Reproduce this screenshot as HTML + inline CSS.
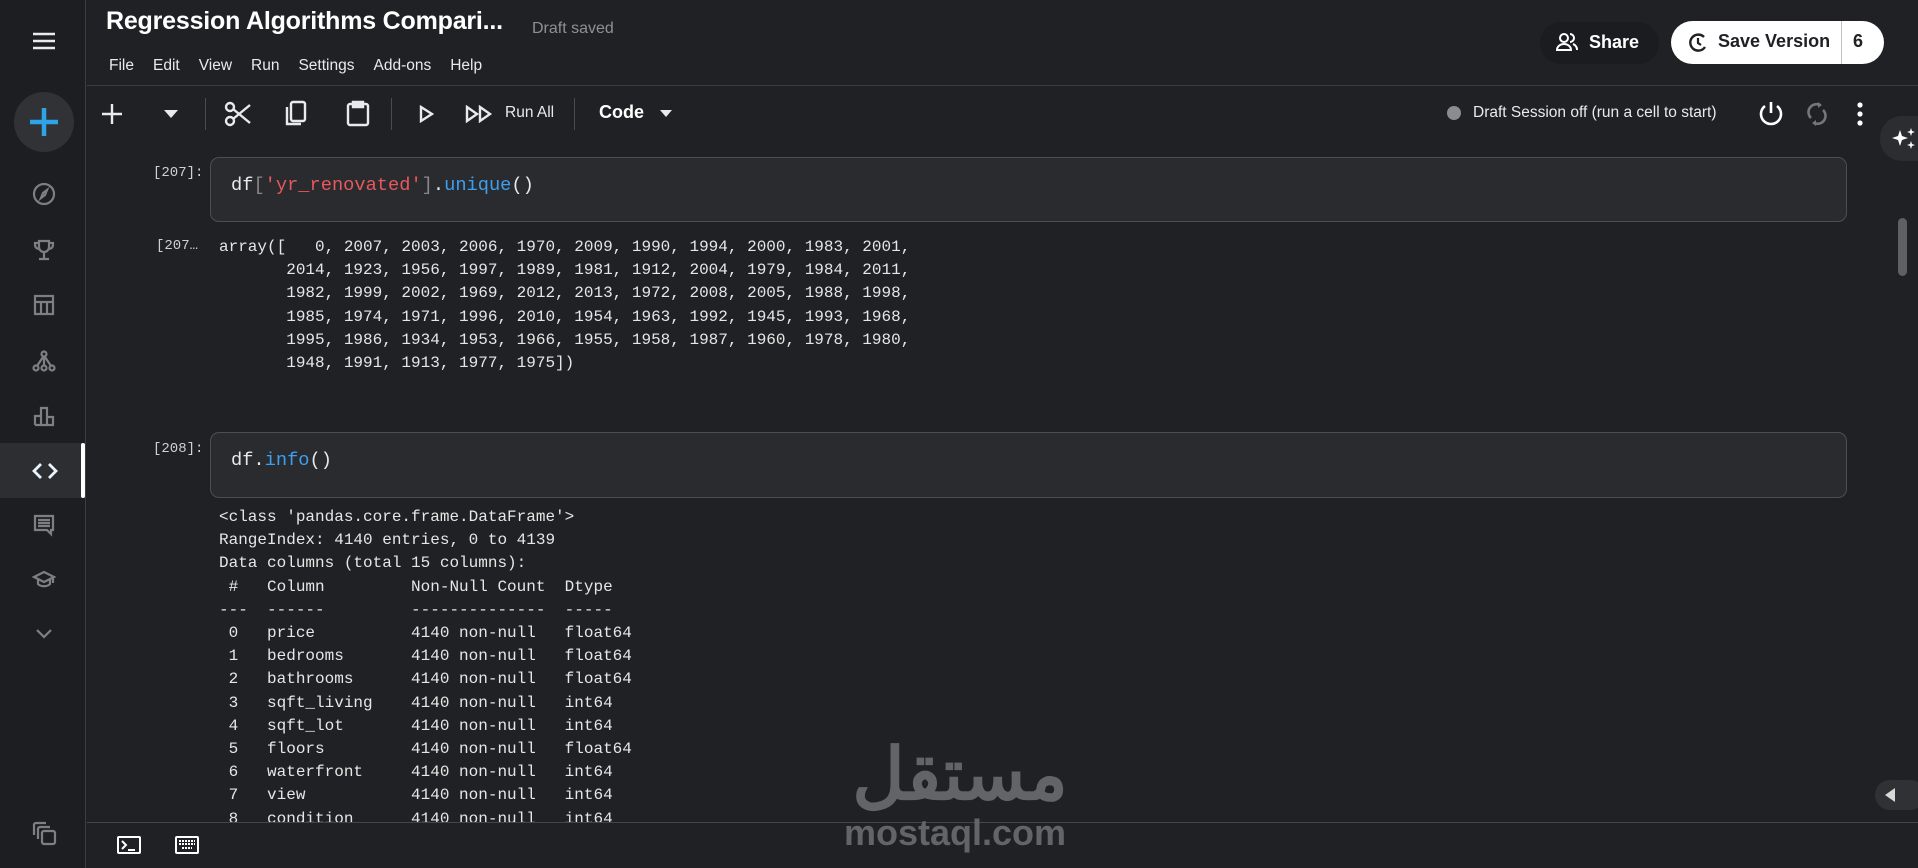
<!DOCTYPE html>
<html><head><meta charset="utf-8"><style>
*{margin:0;padding:0;box-sizing:border-box}
body{width:1918px;height:868px;overflow:hidden;background:#202124;font-family:"Liberation Sans",sans-serif;color:#e8eaed;position:relative}
.a{position:absolute}
.side{left:0;top:0;width:86px;height:868px;background:#1d1e21;border-right:1px solid #3c3d41}
.mono{font-family:"Liberation Mono",monospace}
.cell{border:1px solid #4d4e53;background:#2a2b2f;border-radius:9px}
.pr{font-size:14px;color:#d0d0d0}
.out{font-size:16px;line-height:23.2px;color:#e6e6e6;white-space:pre}
.menu span{margin-right:19px}
.ic{stroke:#7d7f84;fill:none;stroke-width:2.2}
.tb{stroke:#e8eaed;fill:none;stroke-width:2.4}
</style></head><body>
<div class="a side">
 <svg class="a" style="left:32px;top:32px" width="24" height="18"><path d="M1 2h22M1 9h22M1 16h22" stroke="#e8eaed" stroke-width="2.6"/></svg>
 <div class="a" style="left:14px;top:92px;width:60px;height:60px;border-radius:50%;background:#303236"></div>
 <svg class="a" style="left:28px;top:106px" width="32" height="32"><path d="M16 2v28M2 16h28" stroke="#2ea3e6" stroke-width="4.5"/></svg>
 <svg class="a ic" style="left:32px;top:182px" width="24" height="24"><circle cx="12" cy="12" r="10"/><path d="M15 8l-2 5-4 3 2-5z"/></svg>
 <svg class="a ic" style="left:32px;top:238px" width="24" height="24"><path d="M7 3h10v6a5 5 0 0 1-10 0zM7 5H3v2a4 4 0 0 0 4 4M17 5h4v2a4 4 0 0 1-4 4M12 14v6M7 21h10"/></svg>
 <svg class="a ic" style="left:32px;top:293px" width="24" height="24"><rect x="3" y="3" width="18" height="18"/><path d="M3 9h18M9 9v12M15 9v12"/></svg>
 <svg class="a ic" style="left:32px;top:349px" width="24" height="24"><circle cx="12" cy="5" r="2.5"/><circle cx="4" cy="19" r="2.5"/><circle cx="12" cy="19" r="2.5"/><circle cx="20" cy="19" r="2.5"/><path d="M12 7.5v9M11 8l-6 9M13 8l6 9"/></svg>
 <svg class="a ic" style="left:32px;top:404px" width="24" height="24"><path d="M3 21V12h6v9M9 21V4h6v17M15 21v-8h6v8H3"/></svg>
 <div class="a" style="left:0;top:443px;width:85px;height:55px;background:#2d2e32"></div>
 <div class="a" style="left:81px;top:443px;width:4px;height:55px;background:#fff;border-radius:2px"></div>
 <svg class="a" style="left:32px;top:459px" width="26" height="24"><path d="M9 5l-7 7 7 7" stroke="#e8f4ff" stroke-width="2.8" fill="none"/><path d="M17 5l7 7-7 7" stroke="#e8f4ff" stroke-width="2.8" fill="none"/></svg>
 <svg class="a ic" style="left:32px;top:513px" width="24" height="24"><path d="M3 3h18v14h-2v4l-4-4H3z M6 7h12M6 10h12M6 13h12"/></svg>
 <svg class="a ic" style="left:32px;top:568px" width="24" height="24"><path d="M2 9l10-5 10 5-10 5zM6 11v5c3 3 9 3 12 0v-5M21 9v6"/></svg>
 <svg class="a ic" style="left:34px;top:627px" width="20" height="14"><path d="M3 3l7 7 7-7"/></svg>
 <svg class="a ic" style="left:32px;top:821px" width="26" height="26"><path d="M2 14V4a2 2 0 0 1 2-2h10M6 18V8a2 2 0 0 1 2-2h10"/><rect x="10" y="10" width="13" height="13" rx="2"/></svg>
</div>
<div class="a" style="left:106px;top:7px;font-size:25px;font-weight:600;color:#fff;letter-spacing:-.2px">Regression Algorithms Compari...</div>
<div class="a" style="left:532px;top:20px;font-size:16px;color:#8e9094">Draft saved</div>
<div class="a menu" style="left:109px;top:57px;font-size:15.5px;color:#e8eaed;white-space:nowrap"><span>File</span><span>Edit</span><span>View</span><span>Run</span><span>Settings</span><span>Add-ons</span><span>Help</span></div>
<div class="a" style="left:1540px;top:22px;width:119px;height:42px;border-radius:21px;background:#1b1c1f"></div>
<svg class="a" style="left:1556px;top:32px" width="22" height="20"><circle cx="8" cy="6" r="4" stroke="#fff" stroke-width="2" fill="none"/><path d="M1 18a7 6 0 0 1 14 0zM14 2a4 4 0 0 1 0 8M17 12a6 6 0 0 1 4 6" stroke="#fff" stroke-width="2" fill="none"/></svg>
<div class="a" style="left:1589px;top:32px;font-size:18px;font-weight:700;color:#fff">Share</div>
<div class="a" style="left:1671px;top:21px;width:213px;height:43px;border-radius:22px;background:#fff"></div>
<div class="a" style="left:1841px;top:21px;width:1px;height:43px;background:#c8c0c8"></div>
<svg class="a" style="left:1688px;top:32px" width="20" height="20"><path d="M16 5a8 8 0 1 0 1 10" stroke="#202124" stroke-width="2.4" fill="none"/><path d="M10 6v5l3 2" stroke="#202124" stroke-width="2.2" fill="none"/></svg>
<div class="a" style="left:1718px;top:31px;font-size:18px;font-weight:700;color:#202124">Save Version</div>
<div class="a" style="left:1853px;top:31px;font-size:18px;font-weight:700;color:#202124">6</div>
<div class="a" style="left:87px;top:85px;width:1831px;height:1px;background:#3c3d41"></div>
<svg class="a tb" style="left:101px;top:103px" width="22" height="22"><path d="M11 1v20M1 11h20"/></svg>
<svg class="a" style="left:164px;top:110px" width="14" height="8"><path d="M0 0h14L7 8z" fill="#e8eaed"/></svg>
<div class="a" style="left:205px;top:98px;width:1px;height:32px;background:#4a4b50"></div>
<svg class="a tb" style="left:224px;top:100px" width="28" height="28"><circle cx="6" cy="21" r="4"/><circle cx="6" cy="7" r="4"/><path d="M9 9l17 14M9 19L26 5"/></svg>
<svg class="a tb" style="left:284px;top:100px" width="26" height="28"><rect x="7" y="2" width="14" height="19" rx="2"/><path d="M3 7v17h14"/></svg>
<svg class="a tb" style="left:345px;top:99px" width="26" height="28"><rect x="3" y="5" width="20" height="21" rx="2"/><path d="M8 3h10v5H8z" fill="#e8eaed"/></svg>
<div class="a" style="left:391px;top:98px;width:1px;height:32px;background:#4a4b50"></div>
<svg class="a tb" style="left:418px;top:105px" width="16" height="18"><path d="M3 2l11 7-11 7z"/></svg>
<svg class="a tb" style="left:465px;top:105px" width="28" height="18"><path d="M2 2l10 7-10 7zM15 2l10 7-10 7z"/></svg>
<div class="a" style="left:505px;top:104px;font-size:15.5px;color:#e8eaed">Run All</div>
<div class="a" style="left:574px;top:98px;width:1px;height:32px;background:#4a4b50"></div>
<div class="a" style="left:599px;top:102px;font-size:18px;font-weight:700;color:#fff">Code</div>
<svg class="a" style="left:660px;top:110px" width="12" height="7"><path d="M0 0h12L6 7z" fill="#e8eaed"/></svg>
<div class="a" style="left:1447px;top:106px;width:14px;height:14px;border-radius:50%;background:#8a8c91"></div>
<div class="a" style="left:1473px;top:104px;font-size:15.5px;color:#e8eaed">Draft Session off (run a cell to start)</div>
<svg class="a" style="left:1757px;top:100px" width="28" height="28"><path d="M14 2v11" stroke="#fff" stroke-width="2.6"/><path d="M8 6a10 10 0 1 0 12 0" stroke="#fff" stroke-width="2.6" fill="none"/></svg>
<svg class="a" style="left:1805px;top:101px" width="24" height="26"><path d="M6 17a8 8 0 0 1 9-13M18 9a8 8 0 0 1-9 13" stroke="#74767b" stroke-width="2.6" fill="none"/><path d="M13 1l4 3-4 3zM11 25l-4-3 4-3z" fill="#74767b"/></svg>
<svg class="a" style="left:1857px;top:102px" width="6" height="24"><circle cx="3" cy="3" r="2.6" fill="#fff"/><circle cx="3" cy="12" r="2.6" fill="#fff"/><circle cx="3" cy="21" r="2.6" fill="#fff"/></svg>
<div class="a" style="left:1880px;top:116px;width:60px;height:45px;border-radius:22px;background:#2c2d31"></div>
<svg class="a" style="left:1891px;top:127px" width="27" height="24"><path d="M9 3l2 6 6 2-6 2-2 6-2-6-6-2 6-2z" fill="#fff"/><path d="M20 1l1 3 3 1-3 1-1 3-1-3-3-1 3-1zM20 14l1 3 3 1-3 1-1 3-1-3-3-1 3-1z" fill="#fff"/></svg>
<div class="a" style="left:1898px;top:218px;width:9px;height:58px;border-radius:5px;background:#5e6065"></div>
<div class="a" style="left:1875px;top:780px;width:50px;height:30px;border-radius:15px;background:#303135"></div>
<svg class="a" style="left:1885px;top:788px" width="10" height="14"><path d="M10 0v14L0 7z" fill="#d8d8d8"/></svg>

<div class="a mono pr" style="left:153px;top:165px">[207]:</div>
<div class="a cell" style="left:210px;top:157px;width:1637px;height:65px"></div>
<div class="a mono out" style="left:231px;top:174px;font-size:18.7px;color:#e8e8e8">df<span style="color:#888">[</span><span style="color:#e8585c">'yr_renovated'</span><span style="color:#888">]</span>.<span style="color:#3ca0f0">unique</span>()</div>
<div class="a mono pr" style="left:156px;top:238px">[207…</div>
<div class="a mono out" style="left:219px;top:236px">array([   0, 2007, 2003, 2006, 1970, 2009, 1990, 1994, 2000, 1983, 2001,
       2014, 1923, 1956, 1997, 1989, 1981, 1912, 2004, 1979, 1984, 2011,
       1982, 1999, 2002, 1969, 2012, 2013, 1972, 2008, 2005, 1988, 1998,
       1985, 1974, 1971, 1996, 2010, 1954, 1963, 1992, 1945, 1993, 1968,
       1995, 1986, 1934, 1953, 1966, 1955, 1958, 1987, 1960, 1978, 1980,
       1948, 1991, 1913, 1977, 1975])</div>

<div class="a mono pr" style="left:153px;top:441px">[208]:</div>
<div class="a cell" style="left:210px;top:432px;width:1637px;height:66px"></div>
<div class="a mono out" style="left:231px;top:449px;font-size:18.7px;color:#e8e8e8">df.<span style="color:#3ca0f0">info</span>()</div>
<div class="a mono out" style="left:219px;top:506px;height:316px;overflow:hidden">&lt;class 'pandas.core.frame.DataFrame'&gt;
RangeIndex: 4140 entries, 0 to 4139
Data columns (total 15 columns):
 #   Column         Non-Null Count  Dtype  
---  ------         --------------  -----  
 0   price          4140 non-null   float64
 1   bedrooms       4140 non-null   float64
 2   bathrooms      4140 non-null   float64
 3   sqft_living    4140 non-null   int64  
 4   sqft_lot       4140 non-null   int64  
 5   floors         4140 non-null   float64
 6   waterfront     4140 non-null   int64  
 7   view           4140 non-null   int64  
 8   condition      4140 non-null   int64  </div>
<div class="a" style="left:87px;top:822px;width:1831px;height:46px;background:#202124;border-top:1px solid #45464a"></div>
<svg class="a" style="left:116px;top:835px" width="26" height="20"><rect x="1" y="1" width="24" height="18" rx="2" fill="#fff"/><rect x="3" y="3" width="20" height="14" fill="#202124"/><path d="M6 6l4 4-4 4" stroke="#fff" stroke-width="2" fill="none"/><path d="M12 15h7" stroke="#fff" stroke-width="2"/></svg>
<svg class="a" style="left:174px;top:835px" width="26" height="20"><rect x="1" y="1" width="24" height="18" rx="2" fill="#fff"/><rect x="3" y="3" width="20" height="14" fill="#202124"/><path d="M5 6h16M5 9h16M8 13h10" stroke="#fff" stroke-width="2" stroke-dasharray="2 1"/></svg>
<div class="a" style="left:840px;top:735px;width:240px;text-align:center;font-family:'Liberation Sans','Noto Sans CJK SC',sans-serif;font-size:72px;font-weight:700;color:#6b6c70;opacity:.9;line-height:80px">مستقل</div>
<div class="a" style="left:844px;top:812px;font-size:36px;font-weight:700;color:#6b6c70;opacity:.9">mostaql.com</div>
</body></html>
